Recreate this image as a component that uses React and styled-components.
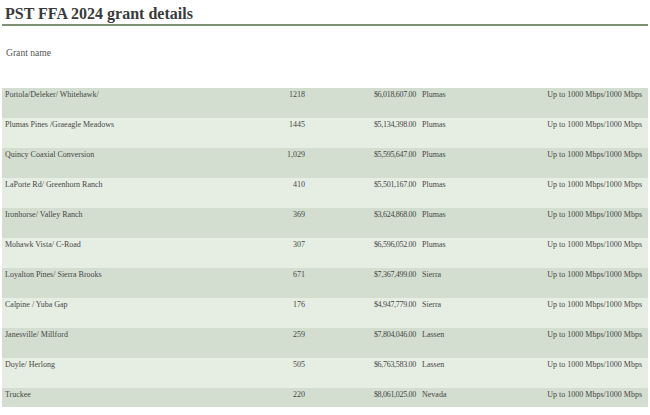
import React from 'react';
import styled, { createGlobalStyle } from 'styled-components';

const GlobalStyle = createGlobalStyle`
  html, body {
    margin: 0;
    padding: 0;
    background: #ffffff;
  }
  body {
    font-family: 'Liberation Serif', 'Times New Roman', serif;
  }
`;

const Page = styled.div`
  width: 650px;
  height: 415px;
  overflow: hidden;
  background: #ffffff;
  padding: 0 2px;
  box-sizing: border-box;
`;

const Title = styled.h1`
  margin: 0;
  padding: 4px 0 0 3px;
  height: 20px;
  font-size: 16px;
  line-height: 20px;
  font-weight: 700;
  color: #3a3a3a;
  border-bottom: 2.5px solid #7d9272;
`;

const Label = styled.div`
  padding: 21px 0 0 4px;
  height: 41px;
  font-size: 9.6px;
  line-height: 12px;
  color: #555555;
`;

const Table = styled.div`
  display: flex;
  flex-direction: column;
`;

const Row = styled.div`
  display: grid;
  grid-template-columns: 250px 50px 111px 1fr 1fr;
  height: ${(p) => p.$height || 30}px;
  padding: 2px 6px 0 3px;
  box-sizing: border-box;
  background: ${(p) => (p.$shade ? '#d3ded0' : '#e6eee3')};
  font-size: 8px;
  line-height: 10px;
  color: #474747;
`;

const Cell = styled.span`
  text-align: ${(p) => p.$align || 'left'};
  padding-left: ${(p) => p.$pad || 0}px;
  white-space: nowrap;
  letter-spacing: ${(p) => (p.$tight ? '-0.3px' : '0')};
`;

const grants = [
  ['Portola/Deleker/ Whitehawk/', '1218', '$6,018,607.00', 'Plumas'],
  ['Plumas Pines /Graeagle Meadows', '1445', '$5,134,398.00', 'Plumas'],
  ['Quincy Coaxial Conversion', '1,029', '$5,595,647.00', 'Plumas'],
  ['LaPorte Rd/ Greenhorn Ranch', '410', '$5,501,167.00', 'Plumas'],
  ['Ironhorse/  Valley Ranch', '369', '$3,624,868.00', 'Plumas'],
  ['Mohawk Vista/ C-Road', '307', '$6,596,052.00', 'Plumas'],
  ['Loyalton Pines/ Sierra Brooks', '671', '$7,367,499.00', 'Sierra'],
  ['Calpine / Yuba Gap', '176', '$4,947,779.00', 'Sierra'],
  ['Janesville/ Millford', '259', '$7,804,046.00', 'Lassen'],
  ['Doyle/ Herlong', '505', '$6,763,583.00', 'Lassen'],
  ['Truckee', '220', '$8,061,025.00', 'Nevada'],
];

export default function App() {
  return (
    <Page>
      <GlobalStyle />
      <Title>PST FFA 2024 grant details</Title>
      <Label>Grant name</Label>
      <Table>
        {grants.map(([name, count, amount, county], i) => (
          <Row key={name} $shade={i % 2 === 0} $height={i === grants.length - 1 ? 19 : 30}>
            <Cell>{name}</Cell>
            <Cell $align="right">{count}</Cell>
            <Cell $align="right" $tight>{amount}</Cell>
            <Cell $pad={6}>{county}</Cell>
            <Cell $align="right">Up to 1000 Mbps/1000 Mbps</Cell>
          </Row>
        ))}
      </Table>
    </Page>
  );
}
